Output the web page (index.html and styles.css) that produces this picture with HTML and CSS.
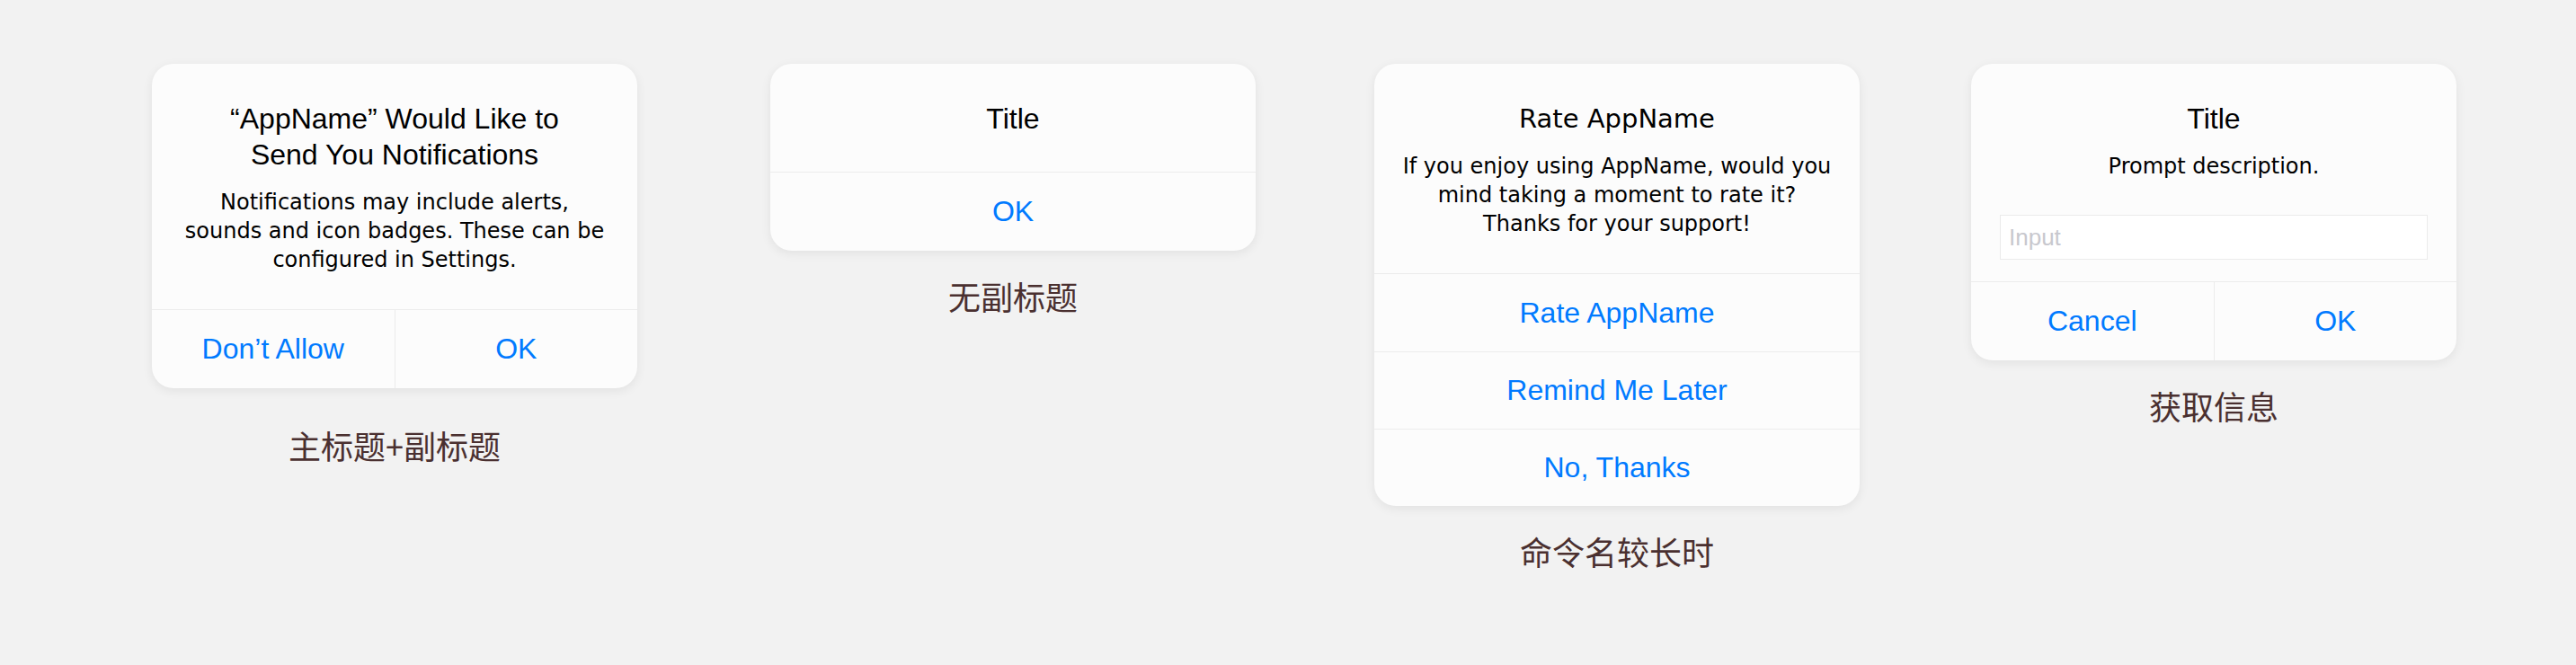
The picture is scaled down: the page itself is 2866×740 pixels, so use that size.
FILE: index.html
```html
<!DOCTYPE html>
<html lang="zh-CN">
<head>
<meta charset="UTF-8">
<meta name="viewport" content="width=device-width, initial-scale=1.0">
<title>Alert 弹窗样式</title>
<link rel="stylesheet" href="styles.css">
</head>
<body>
<div class="board">

    <div class="demo demo-notify">
        <div class="alert">
            <div class="alert-body">
                <h2 class="alert-title">“AppName” Would Like to<br>Send You Notifications</h2>
                <p class="alert-msg">Notifications may include alerts,<br>sounds and icon badges. These can be<br>configured in Settings.</p>
            </div>
            <div class="alert-actions">
                <button class="alert-btn" type="button">Don’t Allow</button>
                <button class="alert-btn" type="button">OK</button>
            </div>
        </div>
        <div class="demo-label">主标题+副标题</div>
    </div>

    <div class="demo demo-plain">
        <div class="alert">
            <div class="alert-body">
                <h2 class="alert-title">Title</h2>
            </div>
            <div class="alert-actions">
                <button class="alert-btn" type="button">OK</button>
            </div>
        </div>
        <div class="demo-label">无副标题</div>
    </div>

    <div class="demo demo-rate">
        <div class="alert">
            <div class="alert-body">
                <h2 class="alert-title alert-title-wide">Rate AppName</h2>
                <p class="alert-msg">If you enjoy using AppName, would you<br>mind taking a moment to rate it?<br>Thanks for your support!</p>
            </div>
            <div class="alert-actions stacked">
                <button class="alert-btn" type="button">Rate AppName</button>
                <button class="alert-btn" type="button">Remind Me Later</button>
                <button class="alert-btn" type="button">No, Thanks</button>
            </div>
        </div>
        <div class="demo-label">命令名较长时</div>
    </div>

    <div class="demo demo-prompt">
        <div class="alert">
            <div class="alert-body alert-body-form">
                <h2 class="alert-title">Title</h2>
                <p class="alert-msg">Prompt description.</p>
                <div class="alert-field">
                    <input class="alert-input" type="text" placeholder="Input">
                </div>
            </div>
            <div class="alert-actions">
                <button class="alert-btn" type="button">Cancel</button>
                <button class="alert-btn" type="button">OK</button>
            </div>
        </div>
        <div class="demo-label">获取信息</div>
    </div>

</div>
</body>
</html>
```

FILE: styles.css
```css
body {
    margin: 0;
    padding: 0;
    background-color: #f2f2f2;
    font-family: "Liberation Sans", Arial, sans-serif;
    color: #000;
}

.board {
    display: flex;
    align-items: flex-start;
    padding: 71px 0 0 169px;
}

.demo {
    width: 540px;
    display: flex;
    flex-direction: column;
}

.demo-plain {
    margin-left: 148px;
}

.demo-rate {
    margin-left: 132px;
}

.demo-prompt {
    margin-left: 124px;
}

.alert {
    background-color: #fcfcfc;
    border-radius: 24px;
    box-shadow: 0 3px 12px rgba(0, 0, 0, 0.07);
    overflow: hidden;
}

.alert-body {
    padding: 41px 24px 39px;
    text-align: center;
}

.alert-body-form {
    padding-bottom: 24px;
}

.alert-title {
    margin: 0;
    font-size: 32px;
    line-height: 40px;
    font-weight: normal;
    white-space: nowrap;
}

.alert-title-wide {
    font-family: "DejaVu Sans", sans-serif;
    font-size: 29px;
}

.alert-msg {
    margin: 17px 0 0;
    font-family: "DejaVu Sans", sans-serif;
    font-size: 24px;
    line-height: 32px;
    white-space: nowrap;
}

.alert-field {
    margin-top: 38px;
    padding: 0 8px;
}

.alert-input {
    display: block;
    box-sizing: border-box;
    width: 100%;
    height: 50px;
    margin: 0;
    padding: 0 9px;
    border: 1px solid #ebebeb;
    background-color: #fff;
    font-family: "Liberation Sans", Arial, sans-serif;
    font-size: 26px;
    outline: none;
}

.alert-input::placeholder {
    color: #c8c8ce;
}

.alert-actions {
    display: flex;
    border-top: 1px solid #ececec;
}

.alert-btn {
    flex: 1;
    height: 87px;
    padding: 0;
    border: none;
    background: none;
    font-family: "Liberation Sans", Arial, sans-serif;
    font-size: 32px;
    color: #007aff;
    cursor: pointer;
}

.alert-btn + .alert-btn {
    border-left: 1px solid #ececec;
}

.alert-actions.stacked {
    flex-direction: column;
}

.stacked .alert-btn {
    flex: none;
    height: 86px;
}

.stacked .alert-btn + .alert-btn {
    border-left: none;
    border-top: 1px solid #ececec;
}

.demo-label {
    margin-top: 30px;
    text-align: center;
    font-family: "Noto Sans CJK SC", sans-serif;
    font-size: 36px;
    line-height: 40px;
    color: #4a3030;
}

.demo-notify .demo-label {
    margin-top: 43px;
}
```
